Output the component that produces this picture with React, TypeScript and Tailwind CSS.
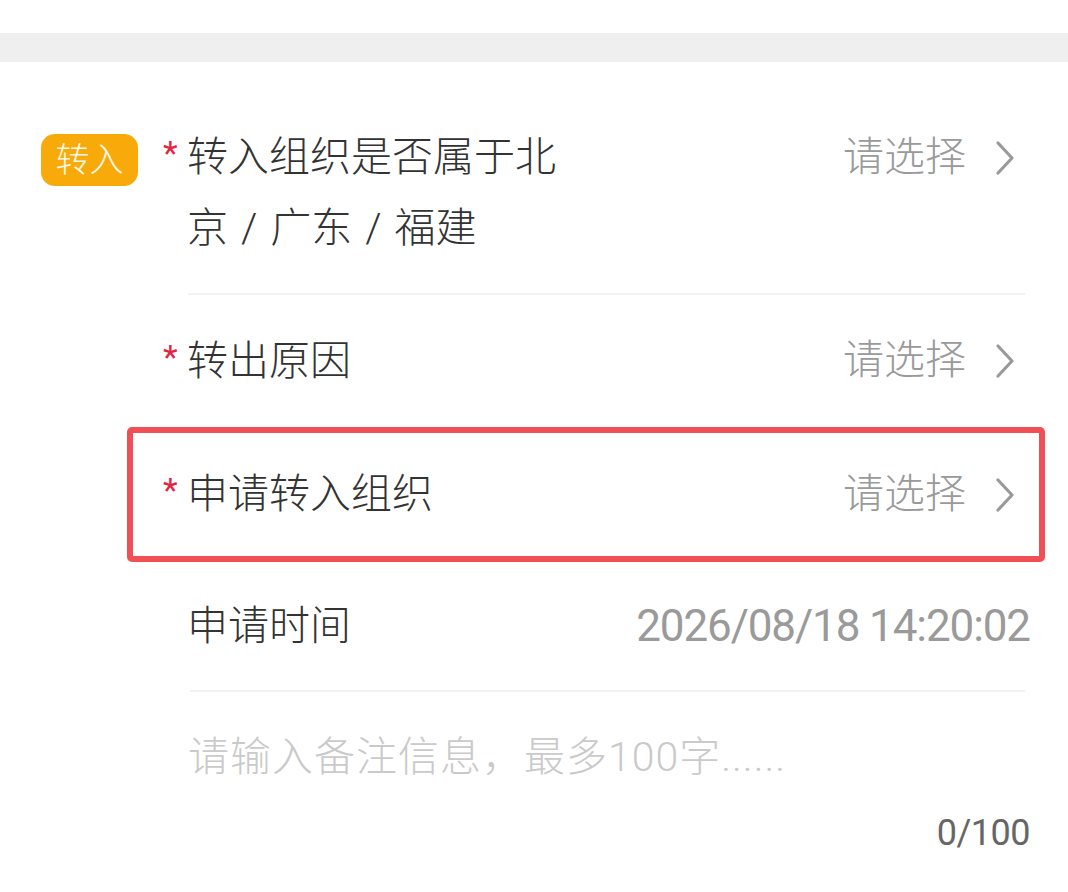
import type { ReactNode } from "react";

const CJK = "font-['Roboto','Noto_Sans_CJK_SC',sans-serif]";

function Chevron() {
  return (
    <svg width="24" height="36" viewBox="0 0 24 36" className="ml-[27px] mr-[13px] shrink-0">
      <path d="M5 3 L19 18 L5 33" fill="none" stroke="#9a9a9a" strokeWidth="3.2" strokeLinecap="round" strokeLinejoin="round" />
    </svg>
  );
}

function RowContent({
  label,
  required,
  value,
  arrow,
  wrap,
}: {
  label: string;
  required?: boolean;
  value: ReactNode;
  arrow?: boolean;
  wrap?: boolean;
}) {
  return (
    <div className={`w-[867px] flex ${wrap ? "items-start" : "items-center"}`}>
      <span className="w-[24px] shrink-0 text-[34px] leading-[71px] text-[#e3243f] self-start -mt-[4px]">
        {required ? "*" : ""}
      </span>
      <span
        className={`text-[41px] leading-[71px] font-light text-[#333] [word-spacing:3px] ${wrap ? "max-w-[400px]" : ""}`}
      >
        {label}
      </span>
      <div className="flex-1" />
      <div className="flex items-center h-[71px]">
        {value}
        {arrow && <Chevron />}
      </div>
    </div>
  );
}

const pick = <span className="text-[41px] font-light text-[#9a9a9a]">请选择</span>;

export default function App() {
  return (
    <div className={`w-[1068px] min-h-[892px] bg-white ${CJK}`}>
      <div className="h-[33px]" />
      <div className="h-[29px] bg-[#efefef]" />

      {/* 转入组织 */}
      <div className="flex pt-[60px] pb-[29px]">
        <div className="w-[163px] shrink-0 pl-[41px] pt-[12px]">
          <div className="w-[97px] h-[52px] rounded-[14px] bg-[#f8aa0a] flex items-center justify-center text-[34px] font-light text-[#fff9e8]">
            转入
          </div>
        </div>
        <RowContent label="转入组织是否属于北京 / 广东 / 福建" required value={pick} arrow wrap />
      </div>
      <div className="ml-[188px] mr-[43px] h-[2px] bg-[#f2f2f2]" />

      {/* 转出原因 */}
      <div className="flex items-center h-[132px]">
        <div className="w-[163px] shrink-0" />
        <RowContent label="转出原因" required value={pick} arrow />
      </div>

      {/* 申请转入组织 (highlighted) */}
      <div className="ml-[127px] mr-[23px] h-[135px] border-[6px] border-[#ef4f55] rounded-[5px] flex items-center pl-[30px]">
        <RowContent label="申请转入组织" required value={pick} arrow />
      </div>

      {/* 申请时间 */}
      <div className="flex items-center h-[128px]">
        <div className="w-[163px] shrink-0" />
        <RowContent
          label="申请时间"
          value={<span className="text-[44px] tracking-[-1.1px] text-[#9a9a9a]">2026/08/18 14:20:02</span>}
        />
      </div>
      <div className="ml-[190px] mr-[43px] h-[2px] bg-[#f2f2f2]" />

      {/* 备注 */}
      <div className="pl-[188px] pr-[38px] pt-[37px]">
        <div className="text-[41px] leading-[56px] font-light tracking-[1px] text-[#cacaca]">请输入备注信息，最多100字......</div>
        <div className="mt-[26px] text-right text-[36px] leading-[44px] tracking-[-0.5px] text-[#666]">0/100</div>
      </div>
    </div>
  );
}
